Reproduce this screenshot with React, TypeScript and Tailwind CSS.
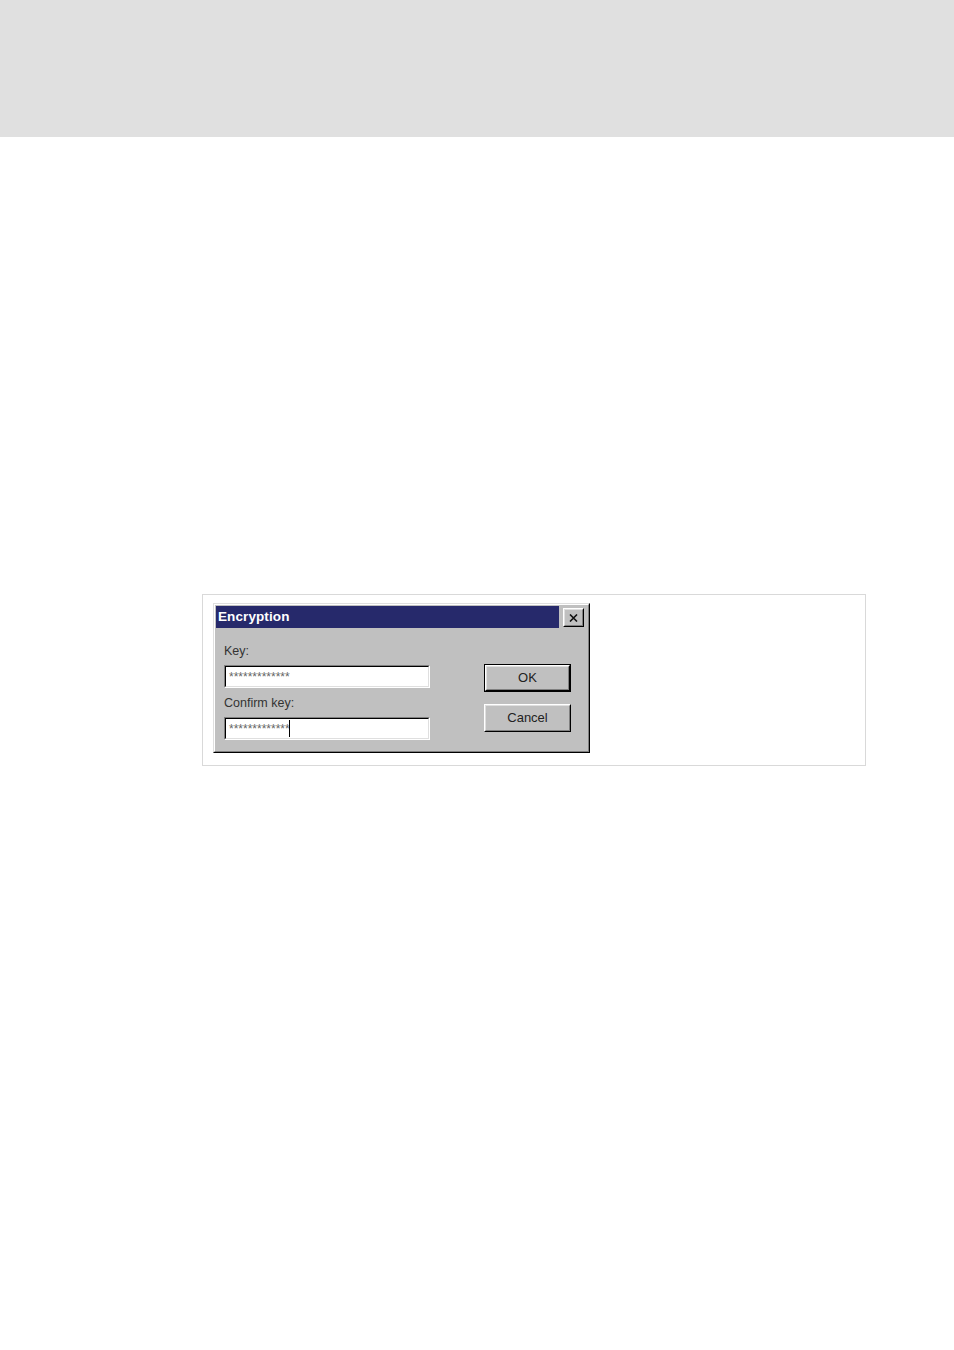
import React from "react";

const Sunken = ({ children }: { children?: React.ReactNode }) => (
  <div className="h-[23px] w-[206px] border border-t-[#808080] border-l-[#808080] border-b-white border-r-white">
    <div className="h-full w-full border border-t-black border-l-black border-b-[#dfdfdf] border-r-[#dfdfdf] bg-white flex items-center pl-[3px]">
      {children}
    </div>
  </div>
);

const Stars = ({ caret }: { caret?: boolean }) => (
  <div className="flex items-center h-full">
    <span className="text-[12px] leading-none text-[#666] pt-[1px] font-['Liberation_Sans',Arial,sans-serif]">
      *************
    </span>
    {caret ? <span className="ml-[-1px] w-[1px] h-[17px] bg-black" /> : null}
  </div>
);

const Button = ({ label, isDefault }: { label: string; isDefault?: boolean }) => (
  <div
    className={
      isDefault
        ? "h-[28px] w-[87px] border border-black"
        : "h-[28px] w-[87px] border border-t-white border-l-white border-b-black border-r-black"
    }
  >
    <div
      className={
        isDefault
          ? "h-full w-full border border-t-white border-l-white border-b-black border-r-black"
          : "h-full w-full border border-t-[#dfdfdf] border-l-[#dfdfdf] border-b-[#808080] border-r-[#808080]"
      }
    >
      <div
        className={
          isDefault
            ? "h-full w-full border border-t-[#dfdfdf] border-l-[#dfdfdf] border-b-[#808080] border-r-[#808080] flex items-center justify-center"
            : "h-full w-full flex items-center justify-center"
        }
      >
        <span className="text-[13px] text-[#222] font-['Liberation_Sans',Arial,sans-serif]">{label}</span>
      </div>
    </div>
  </div>
);

export default function App() {
  return (
    <div className="min-h-[1350px] bg-white">
      <div className="h-[137px] bg-[#e0e0e0]" />

      <div className="mt-[457px] ml-[202px] w-[664px] h-[172px] border border-[#d9d9d9] pl-[10px] pt-[8px]">
        {/* dialog */}
        <div className="w-[377px] h-[150px] border border-t-[#dfdfdf] border-l-[#dfdfdf] border-b-black border-r-black">
          <div className="h-full w-full border border-t-white border-l-white border-b-[#808080] border-r-[#808080] bg-[#c0c0c0] p-[1px]">
            <div className="flex">
              <div className="w-[343px] h-[22px] bg-[#26296b] flex items-center pl-[2px] pt-[1px]">
                <span className="text-white font-bold text-[13.5px] tracking-[0.1px] font-['Liberation_Sans',Arial,sans-serif]">
                  Encryption
                </span>
              </div>
              <div className="ml-[4px] mt-[2px] w-[21px] h-[19px] border border-t-white border-l-white border-b-black border-r-black">
                <div className="h-full w-full border border-t-[#dfdfdf] border-l-[#dfdfdf] border-b-[#808080] border-r-[#808080] bg-[#c0c0c0] flex items-center justify-center">
                  <svg width="9" height="8" viewBox="0 0 9 8">
                    <path d="M1 0.5 L8 7.5 M8 0.5 L1 7.5" stroke="#111" strokeWidth="1.6" />
                  </svg>
                </div>
              </div>
            </div>

            <div className="flex pl-[8px]">
              <div className="flex flex-col w-[206px]">
                <div className="mt-[16px] h-[15px] leading-[15px] text-[12.5px] text-[#333] font-['Liberation_Sans',Arial,sans-serif]">
                  Key:
                </div>
                <div className="mt-[6px]">
                  <Sunken>
                    <Stars />
                  </Sunken>
                </div>
                <div className="mt-[8px] h-[15px] leading-[15px] text-[12.5px] text-[#333] font-['Liberation_Sans',Arial,sans-serif]">
                  Confirm key:
                </div>
                <div className="mt-[6px]">
                  <Sunken>
                    <Stars caret />
                  </Sunken>
                </div>
              </div>
              <div className="ml-[54px] mt-[36px] flex flex-col gap-[12px]">
                <Button label="OK" isDefault />
                <Button label="Cancel" />
              </div>
            </div>
          </div>
        </div>
      </div>
    </div>
  );
}
